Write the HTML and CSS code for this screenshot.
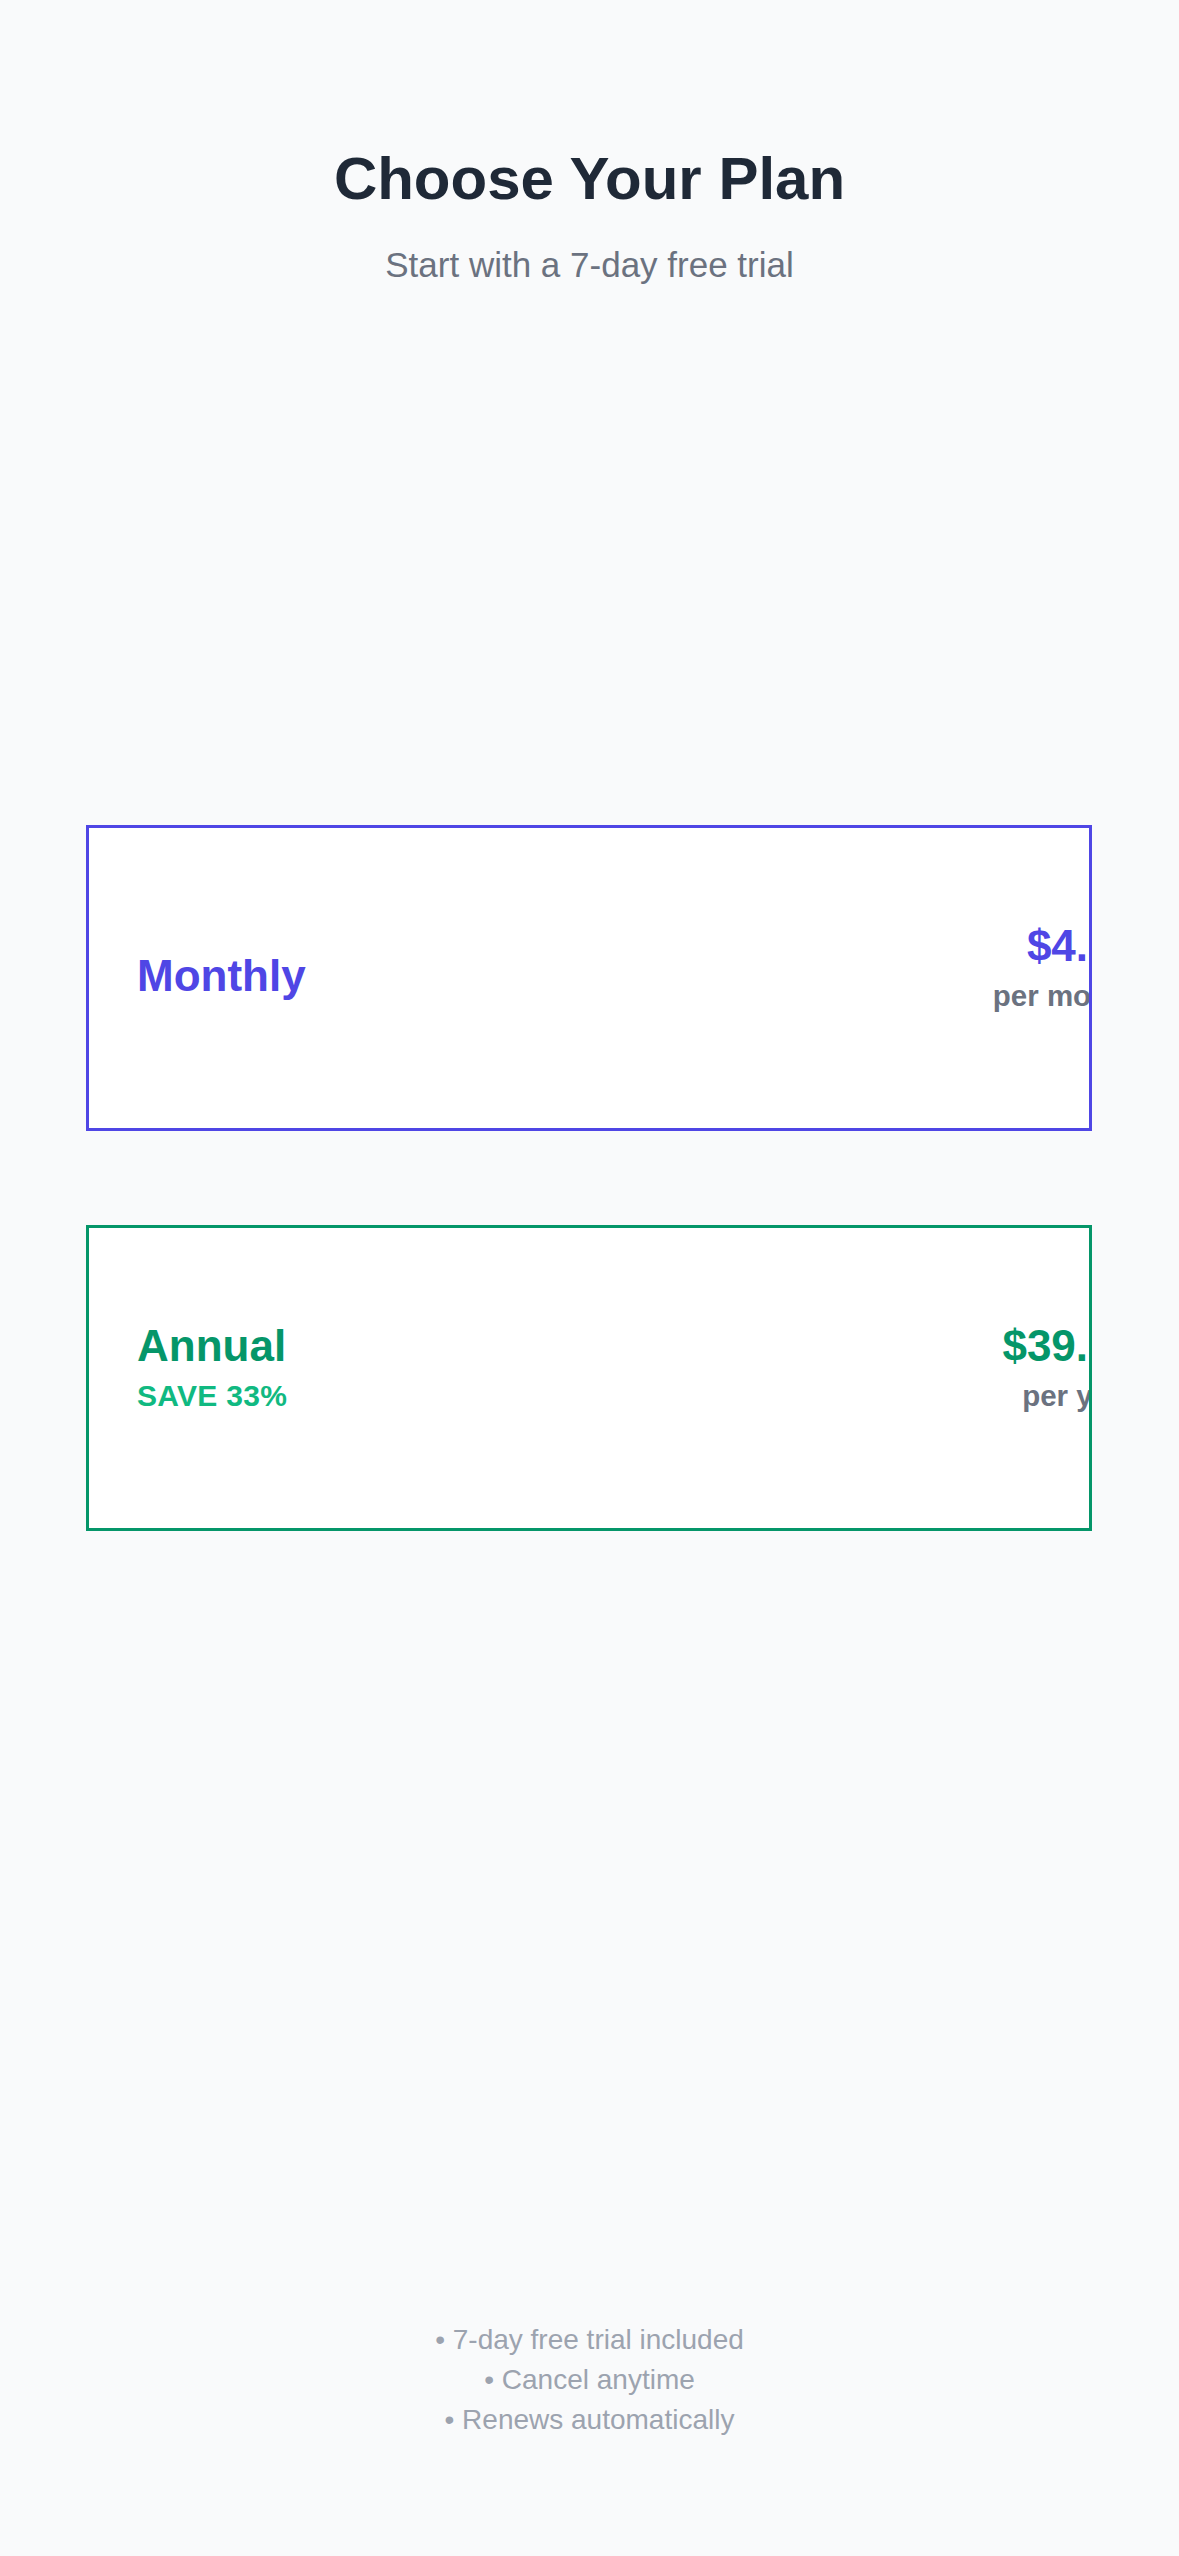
FILE: index.html
```html
<!DOCTYPE html>
<html lang="en">
<head>
<meta charset="utf-8">
<title>Choose Your Plan</title>
<link rel="stylesheet" href="styles.css">
</head>
<body>
<main class="page">
  <header class="hero">
    <h1 class="title">Choose Your Plan</h1>
    <p class="subtitle">Start with a 7-day free trial</p>
  </header>

  <section class="plans">
    <div class="plan plan-monthly">
      <div class="plan-row">
        <div class="plan-info">
          <div class="plan-name">Monthly</div>
        </div>
        <div class="plan-price stacked">
          <div class="price">$4.99</div>
          <div class="period">per month</div>
        </div>
      </div>
    </div>

    <div class="plan plan-annual">
      <div class="plan-row">
        <div class="plan-info stacked">
          <div class="plan-name">Annual</div>
          <div class="badge">SAVE 33%</div>
        </div>
        <div class="plan-price stacked">
          <div class="price">$39.99</div>
          <div class="period">per year</div>
        </div>
      </div>
    </div>
  </section>

  <footer class="notes">
    <div class="note">• 7-day free trial included</div>
    <div class="note">• Cancel anytime</div>
    <div class="note">• Renews automatically</div>
  </footer>
</main>
</body>
</html>
```

FILE: styles.css
```css
* {
  box-sizing: border-box;
}

html, body {
  margin: 0;
  padding: 0;
}

body {
  background: #f9fafb;
  font-family: "Liberation Sans", Arial, Helvetica, sans-serif;
  color: #1f2937;
}

.page {
  width: 1179px;
  min-height: 2556px;
  display: flex;
  flex-direction: column;
}

.hero {
  padding-top: 144px;
  text-align: center;
}

.title {
  margin: 0;
  font-size: 60px;
  line-height: 69px;
  font-weight: 700;
  color: #1f2937;
}

.subtitle {
  margin: 32px 0 0;
  font-size: 35px;
  line-height: 40px;
  font-weight: 400;
  color: #6b7280;
}

.plans {
  margin-top: 540px;
  padding: 0 87px 0 86px;
  display: flex;
  flex-direction: column;
  gap: 94px;
}

.plan {
  height: 306px;
  background: #ffffff;
  border: 3px solid #4f46e5;
  padding: 0 0 6px 48px;
  display: flex;
  align-items: center;
  overflow: hidden;
}

.plan-annual {
  border-color: #059669;
}

.plan-row {
  flex: none;
  width: 1000px;
  display: flex;
  justify-content: space-between;
  align-items: center;
}

.stacked {
  display: flex;
  flex-direction: column;
  padding-bottom: 17px;
}

.plan-price {
  align-items: flex-end;
  text-align: right;
}

.plan-name,
.price {
  font-size: 44px;
  line-height: 51px;
  font-weight: 700;
}

.plan-monthly .plan-name,
.plan-monthly .price {
  color: #4f46e5;
}

.plan-annual .plan-name,
.plan-annual .price {
  color: #059669;
}

.badge {
  margin-top: 8px;
  font-size: 30px;
  line-height: 34px;
  font-weight: 700;
  letter-spacing: 0.3px;
  color: #10b981;
}

.period {
  margin-top: 8px;
  font-size: 29.5px;
  line-height: 34px;
  font-weight: 700;
  color: #6b7280;
}

.notes {
  margin-top: 789px;
  text-align: center;
}

.note {
  font-size: 28px;
  line-height: 40px;
  color: #9ca3af;
}
```
